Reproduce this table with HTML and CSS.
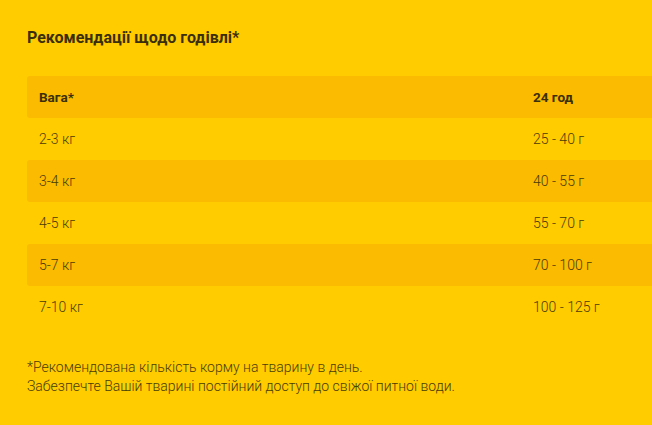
FILE: index.html
```html
<!DOCTYPE html>
<html lang="uk">
<head>
<meta charset="utf-8">
<link rel="stylesheet" href="styles.css">
</head>
<body>
<section class="feeding">
  <h2 class="title">Рекомендації щодо годівлі*</h2>
  <table class="table">
    <thead>
      <tr class="row row-head"><th class="cell c1">Вага*</th><th class="cell c2">24 год</th></tr>
    </thead>
    <tbody>
      <tr class="row"><td class="cell c1">2-3 кг</td><td class="cell c2">25 - 40 г</td></tr>
      <tr class="row row-alt"><td class="cell c1">3-4 кг</td><td class="cell c2">40 - 55 г</td></tr>
      <tr class="row"><td class="cell c1">4-5 кг</td><td class="cell c2">55 - 70 г</td></tr>
      <tr class="row row-alt"><td class="cell c1">5-7 кг</td><td class="cell c2">70 - 100 г</td></tr>
      <tr class="row"><td class="cell c1">7-10 кг</td><td class="cell c2">100 - 125 г</td></tr>
    </tbody>
  </table>
  <p class="note">*Рекомендована кількість корму на тварину в день.<br>Забезпечте Вашій тварині постійний доступ до свіжої питної води.</p>
</section>
</body>
</html>
```

FILE: styles.css
```css
html, body {
  margin: 0;
  padding: 0;
  background: #ffcc00;
}
body {
  font-family: Roboto, "Liberation Sans", sans-serif;
  color: #3d3200;
  overflow: hidden;
}
.feeding {
  padding: 28px 0 0 27px;
}
.title {
  margin: 0;
  font-size: 16px;
  font-weight: 700;
  line-height: 20px;
  color: #3a2f0a;
}
.table {
  margin-top: 28px;
  width: 625px;
  border-collapse: collapse;
  border-spacing: 0;
}
.row {
  height: 42px;
}
.row-head, .row-alt {
  background: #fbbb00;
}
.cell {
  padding: 0 12px;
  text-align: left;
  font-size: 14px;
  font-weight: 300;
  color: #4a3c00;
}
.row-head .cell {
  font-size: 13.5px;
  font-weight: 700;
  color: #3a2f0a;
}
.row-head .c1, .row-alt .c1 {
  border-radius: 3px 0 0 3px;
}
.c1 {
  width: 470px;
}
.note {
  margin: 30px 0 0;
  font-size: 14px;
  font-weight: 300;
  line-height: 19px;
  color: #4a3c00;
}
```
